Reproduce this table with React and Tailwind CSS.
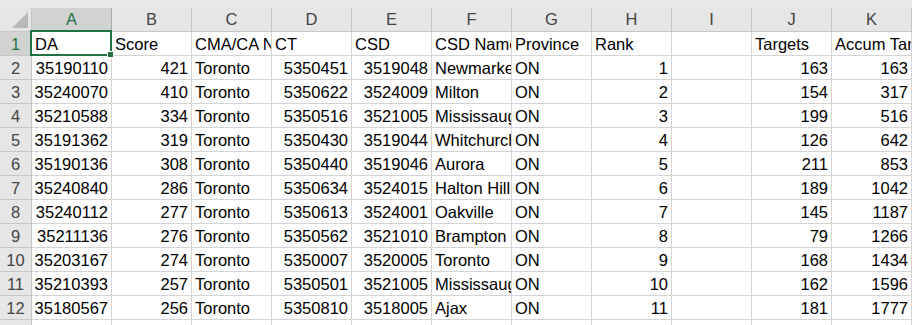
import React from "react";

const cols = ["A", "B", "C", "D", "E", "F", "G", "H", "I", "J", "K"];

// right-aligned (numeric) columns
const numCols = [0, 1, 3, 4, 7, 9, 10];

const header = ["DA", "Score", "CMA/CA Name", "CT", "CSD", "CSD Name", "Province", "Rank", "", "Targets", "Accum Targets"];

const rows = [
  ["35190110", "421", "Toronto", "5350451", "3519048", "Newmarket", "ON", "1", "", "163", "163"],
  ["35240070", "410", "Toronto", "5350622", "3524009", "Milton", "ON", "2", "", "154", "317"],
  ["35210588", "334", "Toronto", "5350516", "3521005", "Mississauga", "ON", "3", "", "199", "516"],
  ["35191362", "319", "Toronto", "5350430", "3519044", "Whitchurch-Stouffville", "ON", "4", "", "126", "642"],
  ["35190136", "308", "Toronto", "5350440", "3519046", "Aurora", "ON", "5", "", "211", "853"],
  ["35240840", "286", "Toronto", "5350634", "3524015", "Halton Hills", "ON", "6", "", "189", "1042"],
  ["35240112", "277", "Toronto", "5350613", "3524001", "Oakville", "ON", "7", "", "145", "1187"],
  ["35211136", "276", "Toronto", "5350562", "3521010", "Brampton", "ON", "8", "", "79", "1266"],
  ["35203167", "274", "Toronto", "5350007", "3520005", "Toronto", "ON", "9", "", "168", "1434"],
  ["35210393", "257", "Toronto", "5350501", "3521005", "Mississauga", "ON", "10", "", "162", "1596"],
  ["35180567", "256", "Toronto", "5350810", "3518005", "Ajax", "ON", "11", "", "181", "1777"],
  ["", "", "", "", "", "", "", "", "", "", ""],
];

const Cell = ({ value, right }) => (
  <div
    className={
      "h-6 border-r border-b border-[#d4d4d4] flex items-end px-[3px] pb-px overflow-hidden whitespace-nowrap leading-[19px] text-black " +
      (right ? "justify-end" : "justify-start")
    }
  >
    {value}
  </div>
);

const App = () => {
  return (
    <div className="relative w-[912px] h-[325px] overflow-hidden bg-white font-['Liberation_Sans',Arial,sans-serif] text-[16.5px]">
      {/* top strip above the column letters */}
      <div className="h-2 bg-[#e9e9e9]" />

      <div className="grid grid-cols-[32px_repeat(11,80px)]">
        {/* corner */}
        <div className="relative h-6 bg-[#e6e6e6] border-r border-b border-[#c6c6c6]">
          <svg className="absolute right-[3px] bottom-[3px]" width="16" height="16" viewBox="0 0 16 16">
            <polygon points="16,0 16,16 0,16" fill="#b9b9b9" />
          </svg>
        </div>

        {/* column letters */}
        {cols.map((c, i) => (
          <div
            key={c}
            className={
              "h-6 flex items-center justify-center leading-[19px] border-r border-b " +
              (i === 0
                ? "bg-[#d2d2d2] text-[#217346] border-r-[#ababab] border-b-[#217346]"
                : "bg-[#e6e6e6] text-[#444444] border-[#c6c6c6]")
            }
          >
            {c}
          </div>
        ))}

        {/* row 1 */}
        <div className="h-6 flex items-end justify-center pb-px leading-[19px] bg-[#d2d2d2] text-[#217346] border-r border-b border-[#c6c6c6]">
          1
        </div>
        {header.map((v, i) => (
          <Cell key={i} value={v} right={false} />
        ))}

        {/* data rows */}
        {rows.map((r, ri) => (
          <React.Fragment key={ri}>
            <div className="h-6 flex items-end justify-center pb-px leading-[19px] bg-[#e6e6e6] text-[#444444] border-r border-b border-[#c6c6c6]">
              {ri + 2}
            </div>
            {r.map((v, ci) => (
              <Cell key={ci} value={v} right={numCols.includes(ci)} />
            ))}
          </React.Fragment>
        ))}
      </div>

      {/* active cell A1 */}
      <div className="absolute left-[30px] top-[30px] w-[82px] h-[26px] border-2 border-[#217346]">
        <div className="absolute -right-[4px] -bottom-[4px] w-[7px] h-[7px] bg-[#217346] border border-white" />
      </div>
    </div>
  );
};

export default App;
